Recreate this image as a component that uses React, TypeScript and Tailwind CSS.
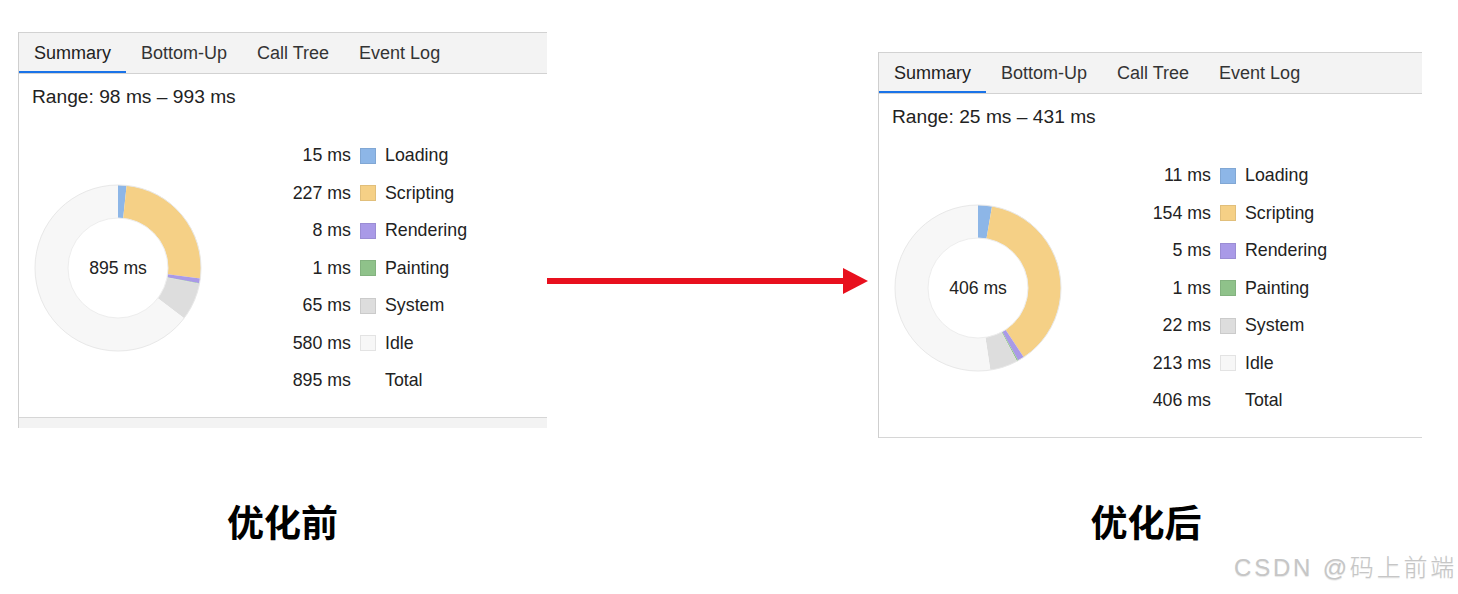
import React from "react";

type Slice = { label: string; value: number; color: string };

const COLORS = {
  Loading: "#8db6e7",
  Scripting: "#f5d086",
  Rendering: "#a99ae7",
  Painting: "#8fc28a",
  System: "#dddddd",
  Idle: "#f7f7f7",
};

const BEFORE: Slice[] = [
  { label: "Loading", value: 15, color: COLORS.Loading },
  { label: "Scripting", value: 227, color: COLORS.Scripting },
  { label: "Rendering", value: 8, color: COLORS.Rendering },
  { label: "Painting", value: 1, color: COLORS.Painting },
  { label: "System", value: 65, color: COLORS.System },
  { label: "Idle", value: 580, color: COLORS.Idle },
];

const AFTER: Slice[] = [
  { label: "Loading", value: 11, color: COLORS.Loading },
  { label: "Scripting", value: 154, color: COLORS.Scripting },
  { label: "Rendering", value: 5, color: COLORS.Rendering },
  { label: "Painting", value: 1, color: COLORS.Painting },
  { label: "System", value: 22, color: COLORS.System },
  { label: "Idle", value: 213, color: COLORS.Idle },
];

const TABS = ["Summary", "Bottom-Up", "Call Tree", "Event Log"];

function Donut({ slices, total }: { slices: Slice[]; total: number }) {
  const r = 66.5;
  const c = 2 * Math.PI * r;
  const sum = slices.reduce((a, s) => a + s.value, 0);
  let start = 0;
  return (
    <div className="relative w-[168px] h-[168px]">
      <svg width="168" height="168" viewBox="0 0 168 168">
        <g transform="rotate(-90 84 84)">
          {slices.map((s) => {
            const len = (s.value / sum) * c;
            const el = (
              <circle
                key={s.label}
                cx="84"
                cy="84"
                r={r}
                fill="none"
                stroke={s.color}
                strokeWidth="33"
                strokeDasharray={`${len} ${c - len}`}
                strokeDashoffset={-start}
              />
            );
            start += len;
            return el;
          })}
        </g>
        <circle cx="84" cy="84" r="83" fill="none" stroke="#e8e8e8" strokeWidth="1" />
        <circle cx="84" cy="84" r="50" fill="none" stroke="#ededed" strokeWidth="1" />
      </svg>
      <div className="absolute inset-0 flex items-center justify-center text-[17.6px] text-[#222]">
        {total} ms
      </div>
    </div>
  );
}

function Panel({
  range,
  slices,
  total,
  width,
  strip,
}: {
  range: string;
  slices: Slice[];
  total: number;
  width: string;
  strip: boolean;
}) {
  return (
    <div className={`${width} flex flex-col border-l border-[#cfcfcf]`}>
      <div className="h-[42px] flex bg-[#f3f3f3] border-t border-b border-[#d2d2d2] text-[18px] text-[#333]">
        {TABS.map((t, i) => (
          <div
            key={t}
            className={`px-[15px] flex items-center ${
              i === 0 ? "text-[#222] shadow-[inset_0_-2px_0_#1a73e8]" : ""
            }`}
          >
            {t}
          </div>
        ))}
      </div>
      <div className="h-[344px] border-b border-[#d6d6d6]">
        <p className="pl-[13px] pt-[11px] text-[19.2px] leading-[24px] text-[#222]">{range}</p>
        <div className="flex items-center mt-[28px]">
          <div className="ml-[15px]">
            <Donut slices={slices} total={total} />
          </div>
          <div className="ml-[69px] text-[17.8px] text-[#222]">
            {slices.map((s) => (
              <div key={s.label} className="h-[37.5px] flex items-center">
                <span className="w-[80px] text-right">{s.value} ms</span>
                <span
                  className="ml-[9px] w-[16px] h-[16px] border border-[#00000014]"
                  style={{ background: s.color }}
                />
                <span className="ml-[9px]">{s.label}</span>
              </div>
            ))}
            <div className="h-[37.5px] flex items-center">
              <span className="w-[80px] text-right">{total} ms</span>
              <span className="ml-[34px]">Total</span>
            </div>
          </div>
        </div>
      </div>
      {strip && <div className="h-[10px] bg-[#f3f3f3]" />}
    </div>
  );
}

export default function App() {
  return (
    <div
      className="relative w-[1458px] h-[594px] bg-white overflow-hidden"
      style={{ fontFamily: '"Liberation Sans", Arial, "Noto Sans CJK SC", sans-serif' }}
    >
      <div className="flex items-start pl-[18px] pt-[32px]">
        <Panel range="Range: 98 ms – 993 ms" slices={BEFORE} total={895} width="w-[529px]" strip />
        <div className="w-[331px] mt-[236px]">
          <svg width="321" height="26" viewBox="0 0 321 26">
            <rect x="0" y="10" width="298" height="6" fill="#e8101e" />
            <polygon points="296,0 321,13 296,26" fill="#e8101e" />
          </svg>
        </div>
        <div className="mt-[20px]">
          <Panel range="Range: 25 ms – 431 ms" slices={AFTER} total={406} width="w-[544px]" strip={false} />
        </div>
      </div>

      <div
        className="flex mt-[62px] text-[37px] leading-[42px] font-bold text-black"
        style={{ fontFamily: '"Noto Sans CJK SC", sans-serif' }}
      >
        <div className="ml-[18px] w-[529px] text-center">优化前</div>
        <div className="ml-[331px] w-[536px] text-center">优化后</div>
      </div>

      <div
        className="absolute left-[1234px] top-[552px] text-[24px] leading-[32px] font-light text-[#c6c6c6] tracking-[2.8px] [text-shadow:0_1px_1px_rgba(0,0,0,0.1)]"
        style={{ fontFamily: '"Liberation Sans", "Noto Sans CJK SC", sans-serif' }}
      >
        CSDN @码上前端
      </div>
    </div>
  );
}
